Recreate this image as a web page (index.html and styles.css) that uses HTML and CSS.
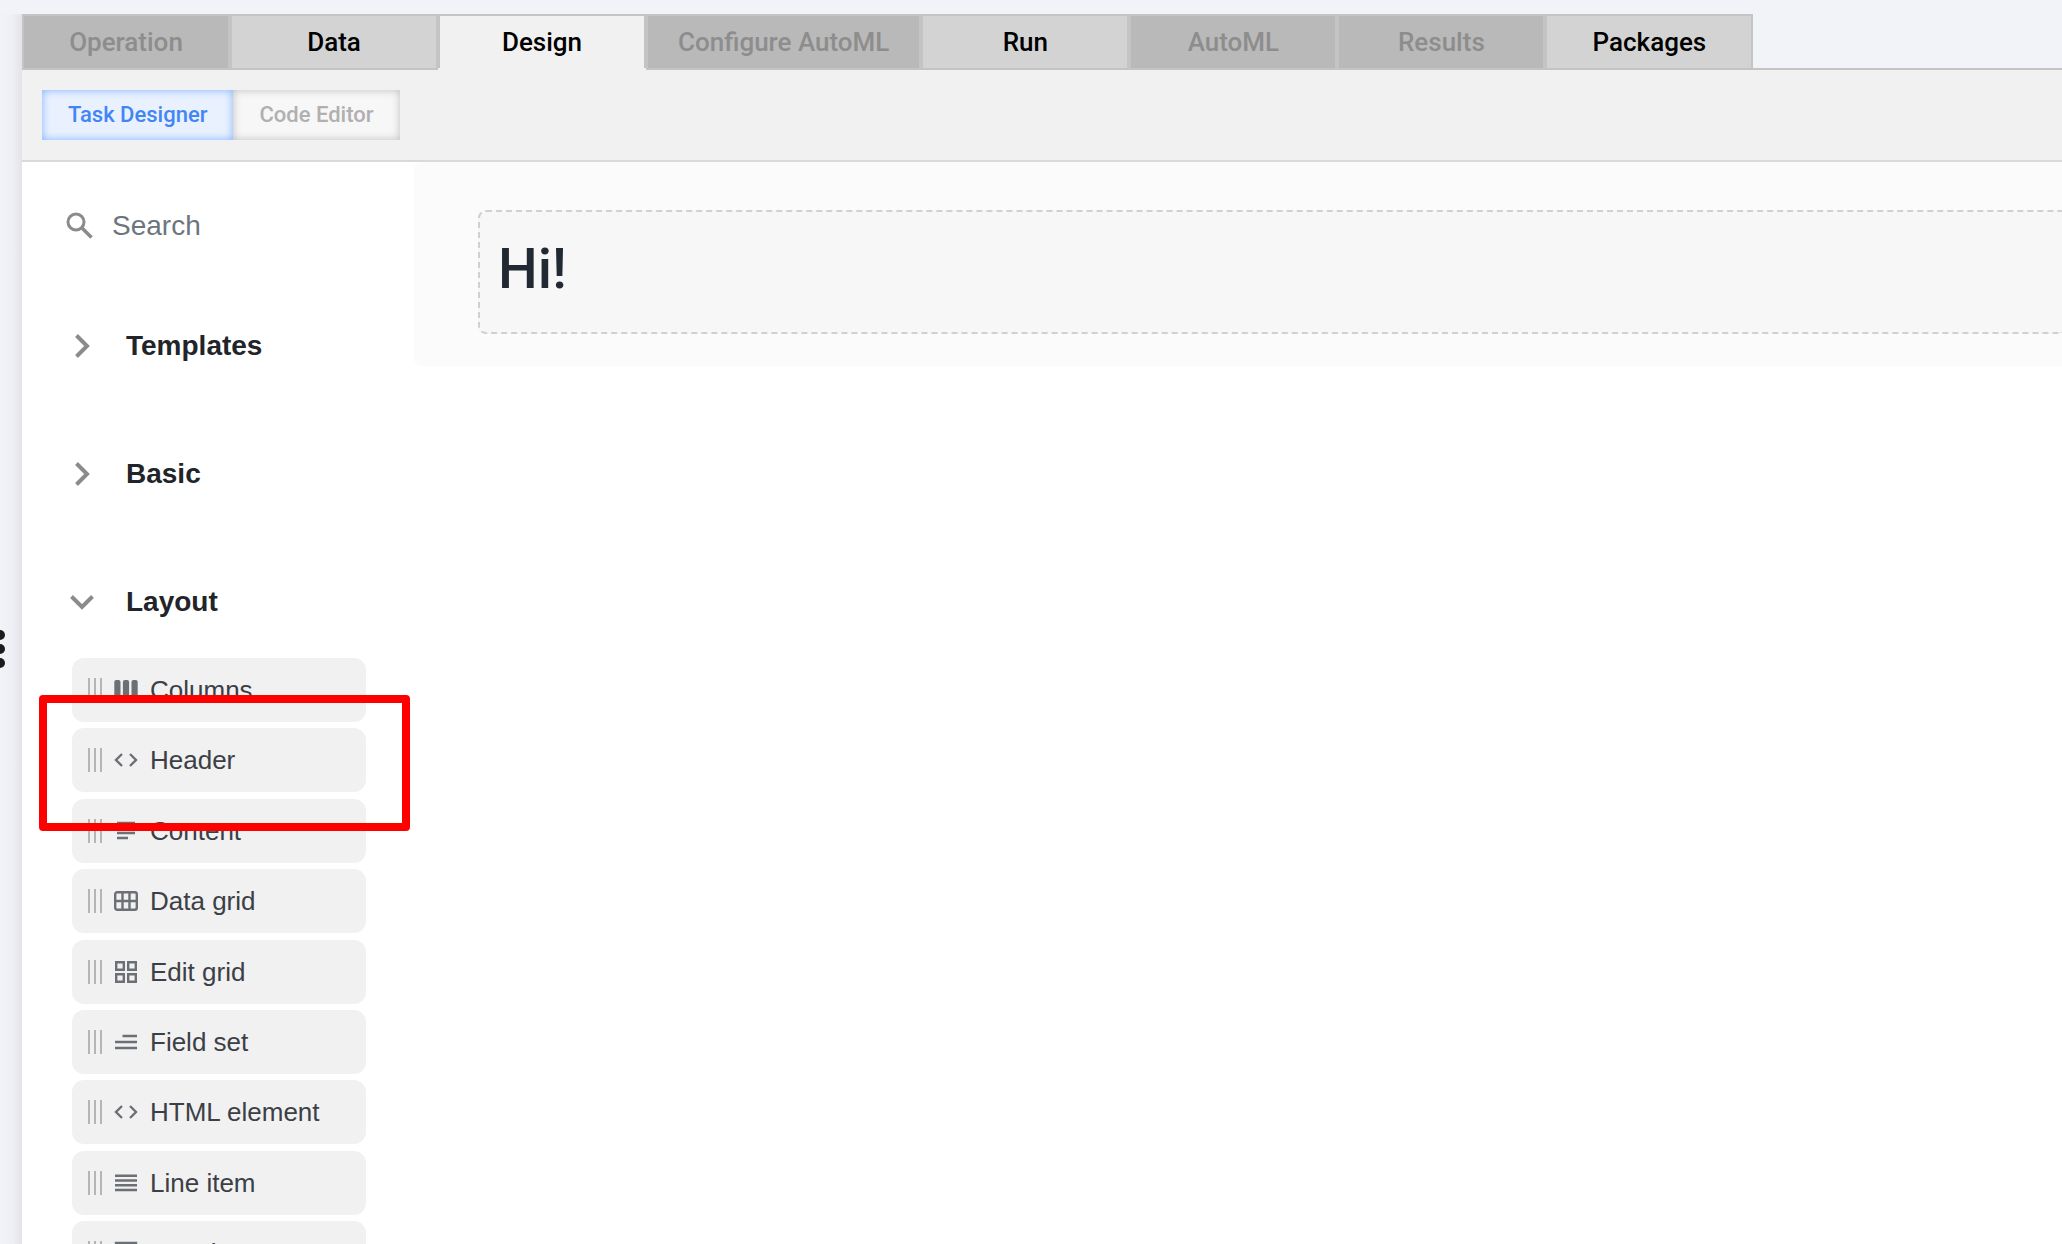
FILE: index.html
```html
<!DOCTYPE html>
<html lang="en">
<head>
<meta charset="utf-8">
<title>Task Designer</title>
<link rel="stylesheet" href="styles.css">
</head>
<body>
<svg class="symbols" aria-hidden="true">
  <symbol id="grip" viewBox="0 0 14 24"><path d="M1 0v24M7 0v24M13 0v24" stroke="#b5b5b5" stroke-width="2"/></symbol>
  <symbol id="chevron" viewBox="0 0 24 24"><path d="M6.500 1.500 17 12 6.500 22.500" fill="none" stroke="#8a8b8d" stroke-width="4"/></symbol>
  <symbol id="code" viewBox="0 0 24 24"><path d="M8 6 2 12l6 6M16 6l6 6-6 6" fill="none" stroke="currentColor" stroke-width="2.400"/></symbol>
</svg>
<div class="app">
  <aside class="rail" aria-label="Resize">
    <span class="dot"></span><span class="dot"></span><span class="dot"></span>
  </aside>
  <main class="workspace">
    <nav class="tabs">
      <button class="tab" disabled>Operation</button>
      <button class="tab">Data</button>
      <button class="tab active">Design</button>
      <button class="tab" disabled>Configure AutoML</button>
      <button class="tab">Run</button>
      <button class="tab" disabled>AutoML</button>
      <button class="tab" disabled>Results</button>
      <button class="tab">Packages</button>
    </nav>
    <div class="toolbar">
      <button class="mode selected">Task Designer</button>
      <button class="mode">Code Editor</button>
    </div>
    <div class="designer">
      <div class="sidebar">
        <label class="search">
          <svg width="28" height="28" viewBox="0 0 28 28"><circle cx="10" cy="10" r="8" fill="none" stroke="#8a8b8d" stroke-width="3"/><path d="m15.500 15.500 10 10" stroke="#8a8b8d" stroke-width="3.500"/></svg>
          <input type="text" placeholder="Search" aria-label="Search">
        </label>
        <button class="group"><svg width="24" height="24"><use href="#chevron"/></svg>Templates</button>
        <button class="group"><svg width="24" height="24"><use href="#chevron"/></svg>Basic</button>
        <button class="group open"><svg width="24" height="24"><use href="#chevron"/></svg>Layout</button>
        <ul class="components">
          <li><svg class="grip"><use href="#grip"/></svg><svg class="icon" viewBox="0 0 24 24"><rect x=".3" y="2" width="6.200" height="20" rx="2" fill="currentColor"/><rect x="8.900" y="2" width="6.200" height="20" rx="2" fill="currentColor"/><rect x="17.500" y="2" width="6.200" height="20" rx="2" fill="currentColor"/></svg>Columns</li>
          <li><svg class="grip"><use href="#grip"/></svg><svg class="icon"><use href="#code"/></svg>Header</li>
          <li><svg class="grip"><use href="#grip"/></svg><svg class="icon" viewBox="0 0 24 24"><path d="M3 4h18M3 9h18M3 14h18M3 19h11" stroke="currentColor" stroke-width="2.400"/></svg>Content</li>
          <li><svg class="grip"><use href="#grip"/></svg><svg class="icon" viewBox="0 0 24 24"><rect x="1.200" y="3.200" width="21.600" height="17.600" rx="2" fill="none" stroke="currentColor" stroke-width="2.400"/><path d="M1 12h22M8.500 3v18M15.500 3v18" stroke="currentColor" stroke-width="2.400"/></svg>Data grid</li>
          <li><svg class="grip"><use href="#grip"/></svg><svg class="icon" viewBox="0 0 24 24"><path d="M2.200 2.200h7.600v7.600H2.200zM14.200 2.200h7.600v7.600h-7.600zM2.200 14.200h7.600v7.600H2.200zM14.200 14.200h7.600v7.600h-7.600z" fill="none" stroke="currentColor" stroke-width="2.400"/></svg>Edit grid</li>
          <li><svg class="grip"><use href="#grip"/></svg><svg class="icon" viewBox="0 0 24 24"><path d="M8.500 6H23M1 12h22M1 18h22" stroke="currentColor" stroke-width="2.400"/></svg>Field set</li>
          <li><svg class="grip"><use href="#grip"/></svg><svg class="icon"><use href="#code"/></svg>HTML element</li>
          <li><svg class="grip"><use href="#grip"/></svg><svg class="icon" viewBox="0 0 24 24"><path d="M1 4.700h22M1 9.500h22M1 14.200h22M1 19h22" stroke="currentColor" stroke-width="2.400"/></svg>Line item</li>
          <li><svg class="grip"><use href="#grip"/></svg><svg class="icon" viewBox="0 0 24 24"><path d="M2 2h20v20H2zM2 7h20" fill="none" stroke="currentColor" stroke-width="2.400"/></svg>Panel</li>
        </ul>
        <div class="highlight"></div>
      </div>
      <section class="canvas">
        <div class="block"><h1>Hi!</h1></div>
      </section>
    </div>
  </main>
</div>
</body>
</html>
```
FILE: styles.css
```css
* { box-sizing: border-box; }
body {
  margin: 0;
  background: #f2f3f8;
  font-family: "Liberation Sans", Arial, sans-serif;
  overflow: hidden;
}
button { font: inherit; margin: 0; padding: 0; border: 0; background: none; }
svg { flex: none; }
.symbols { position: absolute; width: 0; height: 0; }
.app { display: flex; height: 100vh; padding-top: 14px; overflow: hidden; }
.rail {
  flex: none;
  width: 22px;
  display: flex;
  flex-direction: column;
  justify-content: center;
  gap: 4px;
  padding-top: 40px;
  background: linear-gradient(to right, #f2f3f8, #eeeff4 60%, #e3e4e9);
}
.dot { width: 10px; height: 10px; margin-left: -5px; border-radius: 50%; background: #1c1c1c; }
.workspace { flex: 1; min-width: 0; background: #fff; }

.tabs {
  display: flex;
  background: #f2f3f8;
  font: 500 26px/30px Roboto, sans-serif;
  box-shadow: inset 0 -2px #c4c4c4;
}
.tab {
  min-width: 208px;
  height: 56px;
  padding: 0 30px;
  border: 2px solid #c4c4c4;
  background: #d3d3d3;
  color: #000;
}
.tab:disabled { background: #b9b9b9; color: #8d8d8d; }
/* The open tab runs into the toolbar; only its top edge and a shared side edge are drawn. */
.tab.active {
  border-width: 2px 0;
  border-bottom-color: #f1f1f1;
  background: #f1f1f1;
  box-shadow: inset 2px 0 #c4c4c4, inset -2px 0 #c4c4c4;
}

.toolbar {
  display: flex;
  padding: 20px;
  height: 92px;
  background: #f1f1f1;
  border-bottom: 2px solid #d9d9d9;
}
.mode {
  height: 50px;
  padding: 0 26px;
  font: 500 22px/26px Roboto, sans-serif;
  color: #b0b0b0;
  background: #f7f7f7;
  box-shadow: inset 0 0 8px #bdbdbd;
}
.mode.selected { color: #4285f4; background: #e9f1ff; box-shadow: inset 0 0 8px #7fb0ff; }

.designer { display: flex; align-items: flex-start; }
.sidebar { position: relative; flex: none; width: 392px; padding: 38px 48px 0 32px; }
.search { display: flex; align-items: center; gap: 18px; height: 52px; padding-left: 12px; }
.search input {
  width: 200px;
  padding: 0;
  border: 0;
  outline: 0;
  background: none;
  font: 28px/32px "Liberation Sans", Arial, sans-serif;
}
.search input::placeholder { color: #6c757d; opacity: 1; }
.search + .group { margin-top: 30px; }
.group {
  display: flex;
  align-items: center;
  gap: 32px;
  width: 100%;
  height: 128px;
  padding-left: 16px;
  font-weight: 700;
  font-size: 28px;
  line-height: 32px;
  color: #212529;
}
.group.open svg { transform: rotate(90deg); }
.components { margin: -8px 0 0; padding: 0 0 0 18px; list-style: none; }
.components li {
  display: flex;
  align-items: center;
  height: 64px;
  margin-bottom: 6px;
  padding-left: 16px;
  border-radius: 12px;
  background: #f1f1f1;
  font-size: 26px;
  line-height: 30px;
  color: #3b4046;
}
.components li:nth-child(5n+2),
.components li:nth-child(5n+4) { margin-bottom: 7px; }
.grip { width: 14px; height: 24px; margin-right: 12px; }
.icon { width: 24px; height: 24px; margin-right: 12px; color: #6c7075; }
.highlight {
  position: absolute;
  left: 17px;
  top: 533px;
  width: 371px;
  height: 136px;
  border: 8px solid #f00;
  border-radius: 4px;
}

.canvas { flex: 1; min-width: 0; padding: 48px 0 32px 64px; background: #fbfbfb; border-radius: 8px 0 0 8px; }
.block {
  padding: 24px 18px 30px;
  border: 2px dashed #d0d0d0;
  border-right: 0;
  border-radius: 8px 0 0 8px;
  background: #f7f7f7;
}
.block h1 { margin: 0; font: 500 56px/66px Roboto, sans-serif; color: #212932; }
```
